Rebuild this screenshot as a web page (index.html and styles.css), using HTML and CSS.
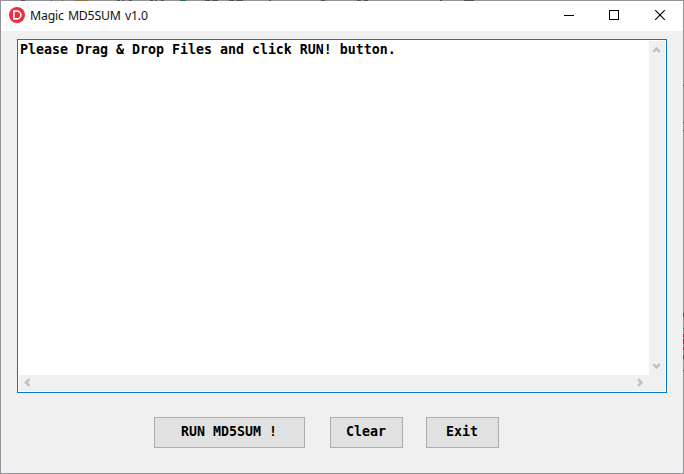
FILE: index.html
```html
<!DOCTYPE html>
<html lang="en">
<head>
<meta charset="utf-8">
<title>Magic MD5SUM v1.0</title>
<link rel="stylesheet" href="styles.css">
</head>
<body>
<div class="window">
  <svg class="edge" width="684" height="474" viewBox="0 0 684 474" shape-rendering="crispEdges">
    <path d="M21 0h4v1h-4zM51 0h1v1h-1zM62 0h1v1h-1zM117 0h3v1h-3zM122 0h2v1h-2zM129 0h3v1h-3zM150 0h3v1h-3zM155 0h2v1h-2zM161 0h3v1h-3zM205 0h5v1h-5zM212 0h6v1h-6zM229 0h5v1h-5zM236 0h7v1h-7zM269 0h2v1h-2zM321 0h4v1h-4zM357 0h4v1h-4zM364 0h4v1h-4zM440 0h2v1h-2zM464 0h10v1h-10z" fill="#554f53"/>
    <path d="M75 0h13v1H75z" fill="#92713f"/>
    <path d="M180 0h6v1h-6z" fill="#2c6a59"/>
    <path d="M683 85h1v1h-1zM683 122h1v1h-1zM683 130h1v1h-1zM683 313h1v4h-1zM683 328h1v1h-1zM683 355h1v4h-1zM683 370h1v1h-1z" fill="#505055"/>
    <path d="M683 334h1v3h-1zM683 339h1v5h-1zM683 347h1v3h-1z" fill="#8c3347"/>
  </svg>
  <header class="titlebar">
    <svg class="logo" width="16" height="16" viewBox="0 0 16 16"><circle cx="8" cy="8" r="8" fill="#f02c40"/><path d="M4.9 4.1H8a3.9 3.9 0 0 1 0 7.8H4.9Z" fill="none" stroke="#fff" stroke-width="1.6"/></svg>
    <h1 class="title">Magic MD5SUM v1.0</h1>
    <div class="controls">
      <svg width="45" height="30" viewBox="0 0 45 30" shape-rendering="crispEdges"><path d="M18 14h10v1H18z"/></svg>
      <svg width="46" height="30" viewBox="0 0 46 30" shape-rendering="crispEdges"><path d="M18.5 9.5h9v9h-9z" fill="none" stroke="#000"/></svg>
      <svg width="46" height="30" viewBox="0 0 46 30"><path d="M18.2 9.2l9.6 9.6M27.8 9.2l-9.6 9.6" fill="none" stroke="#000" stroke-width="1.15"/></svg>
    </div>
  </header>
  <main class="client">
    <div class="memo">
      <div class="text">Please Drag &amp; Drop Files and click RUN! button.</div>
      <div class="vbar">
        <svg width="16" height="16" viewBox="0 0 16 16"><path d="M4.2 11L7.5 7.5l3.3 3.5" class="arrow"/></svg>
        <svg width="16" height="16" viewBox="0 0 16 16"><path d="M4.2 5l3.3 3.5L10.8 5" class="arrow"/></svg>
      </div>
      <div class="hbar">
        <svg width="16" height="16" viewBox="0 0 16 16"><path d="M10.5 4.2L7 7.5l3.5 3.3" class="arrow"/></svg>
        <svg width="16" height="16" viewBox="0 0 16 16"><path d="M5 4.2l3.5 3.3L5 10.8" class="arrow"/></svg>
      </div>
      <div class="corner"></div>
    </div>
    <div class="buttons">
      <button class="btn run">RUN MD5SUM !</button>
      <button class="btn clear">Clear</button>
      <button class="btn exit">Exit</button>
    </div>
  </main>
</div>
</body>
</html>
```
FILE: styles.css
```css
* { box-sizing: border-box; }
body { margin: 0; }
.window {
  position: relative;
  width: 684px;
  height: 474px;
  border: 1px solid #929297;
  background: #f0f0f0;
  display: flex;
  flex-direction: column;
}
.edge { position: absolute; top: -1px; left: -1px; pointer-events: none; }
.titlebar {
  height: 30px;
  background: #fff;
  display: flex;
  align-items: center;
  padding-left: 8px;
}
.logo { margin-right: 5px; position: relative; top: -1px; }
.title {
  margin: 0;
  font: 400 12.3px/28px "Noto Sans", "Open Sans", sans-serif;
  letter-spacing: -0.2px;
  word-spacing: 1.2px;
  color: #111;
  white-space: nowrap;
}
.controls { margin-left: auto; display: flex; }
.client { flex: 1; padding: 8px 16px 0; }
.memo {
  width: 650px;
  height: 354px;
  border: 1px solid #0078d7;
  background: #fff;
  padding: 1px;
  display: grid;
  grid-template-columns: 630px 16px;
  grid-template-rows: 334px 16px;
}
.text, .btn {
  font: bold 13.29px/16px "DejaVu Sans Mono", "Liberation Mono", monospace;
  color: #000;
}
.text { padding: 1px; white-space: pre; }
.vbar, .hbar { background: #f0f0f0; display: flex; justify-content: space-between; }
.vbar { flex-direction: column; grid-column: 2; grid-row: 1; }
.hbar { grid-column: 1; grid-row: 2; }
.corner { background: #f0f0f0; grid-column: 2; grid-row: 2; }
.arrow { fill: none; stroke: #bfbfbf; stroke-width: 2.5; }
.buttons { display: flex; padding: 24px 0 0 137px; }
.btn {
  height: 31px;
  padding: 0 1px 1px 0;
  border: 1px solid #adadad;
  border-radius: 0;
  background: #e1e1e1;
  white-space: pre;
}
.run { width: 151px; margin-right: 25px; }
.clear { width: 73px; margin-right: 23px; }
.exit { width: 73px; }
```
